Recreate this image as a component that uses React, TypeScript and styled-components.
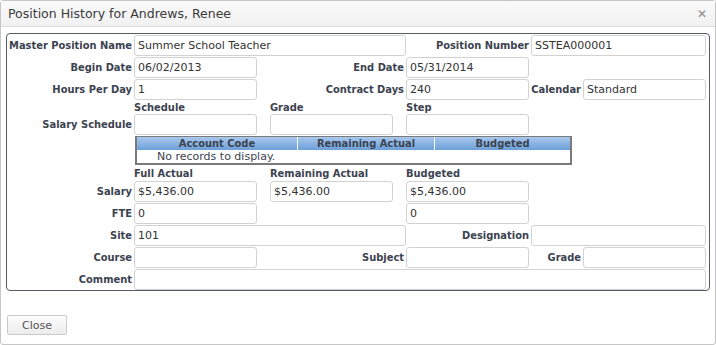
import React from "react";
import styled, { createGlobalStyle } from "styled-components";

const GlobalStyle = createGlobalStyle`
  html, body {
    margin: 0;
    padding: 0;
    background: #ffffff;
  }
  body {
    font-family: "DejaVu Sans", Verdana, sans-serif;
    font-size: 11px;
    color: #333;
  }
`;

const boldFont = `"DejaVu Sans Condensed", "DejaVu Sans", Verdana, sans-serif`;

const Dialog = styled.div`
  box-sizing: border-box;
  width: 716px;
  height: 345px;
  border: 1px solid #c6c6c6;
  border-radius: 3px;
  background: #fff;
  display: flex;
  flex-direction: column;
`;

const TitleBar = styled.div`
  height: 25px;
  display: flex;
  align-items: center;
  justify-content: space-between;
  padding: 0 8px 0 7px;
  background: linear-gradient(#fafafa, #f1f1f1);
  border-bottom: 1px solid #dcdcdc;
`;

const Title = styled.span`
  font-size: 12.5px;
  color: #3a3a3a;
`;

const CloseX = styled.span`
  font-size: 12px;
  color: #8a8a8a;
  line-height: 1;
`;

const Body = styled.div`
  padding: 6px 5px 0 5px;
  flex: 1;
  display: flex;
  flex-direction: column;
`;

const Fieldset = styled.div`
  box-sizing: border-box;
  width: 704px;
  border: 1px solid #555b66;
  border-radius: 4px;
  padding: 1px 1px 0 1px;
`;

const FormGrid = styled.div`
  display: grid;
  grid-template-columns: 126px 123px 13px 123px 13px 123px 2px 52px 123px;
  row-gap: 1px;
  grid-template-rows: 21px 21px 21px 12px 21px 29px 14px 21px 21px 21px 21px 21px;
`;

type Span = { col: string };

const Label = styled.label<Span>`
  grid-column: ${({ col }) => col};
  display: flex;
  align-items: center;
  justify-content: flex-end;
  padding-right: 2px;
  font-family: ${boldFont};
  font-weight: bold;
  color: #3c4350;
  white-space: nowrap;
`;

const ColHead = styled.div<Span>`
  grid-column: ${({ col }) => col};
  font-family: ${boldFont};
  font-weight: bold;
  color: #3c4350;
  display: flex;
  align-items: center;
  white-space: nowrap;
`;

const Field = styled.div<Span>`
  grid-column: ${({ col }) => col};
  box-sizing: border-box;
  height: 21px;
  border: 1px solid #d2d2d2;
  border-radius: 3px;
  padding: 0 3px;
  display: flex;
  align-items: center;
  color: #333;
  white-space: nowrap;
`;

const Spacer = styled.div<Span>`
  grid-column: ${({ col }) => col};
`;

const Grid = styled.div`
  grid-column: 2 / 9;
  box-sizing: border-box;
  width: 437px;
  margin-left: 1px;
  border: 2px solid #7a7a7a;
  border-top-width: 1px;
  display: flex;
  flex-direction: column;
`;

const GridHead = styled.div`
  display: grid;
  grid-template-columns: 161px 137px 1fr;
  height: 13px;
`;

const HeadCell = styled.div<{ last?: boolean }>`
  background: linear-gradient(#a9c8ec, #6c9fd9);
  border-right: ${({ last }) => (last ? "none" : "1px solid #fff")};
  font-family: ${boldFont};
  font-weight: bold;
  color: #3c4350;
  text-align: center;
  line-height: 13px;
`;

const EmptyRow = styled.div`
  padding-left: 20px;
  line-height: 13px;
  color: #3c4350;
`;

const Footer = styled.div`
  padding-top: 24px;
  padding-left: 1px;
`;

const Button = styled.button`
  box-sizing: border-box;
  width: 60px;
  height: 20px;
  border: 1px solid #cacaca;
  border-radius: 2px;
  background: linear-gradient(#fdfdfd, #ececec);
  font-family: inherit;
  font-size: 11px;
  color: #555;
  padding: 0;
`;

export default function App() {
  return (
    <>
      <GlobalStyle />
      <Dialog>
        <TitleBar>
          <Title>Position History for Andrews, Renee</Title>
          <CloseX>✕</CloseX>
        </TitleBar>
        <Body>
          <Fieldset>
            <FormGrid>
              <Label col="1">Master Position Name</Label>
              <Field col="2 / 6">Summer School Teacher</Field>
              <Label col="6 / 8">Position Number</Label>
              <Field col="8 / 10">SSTEA000001</Field>

              <Label col="1">Begin Date</Label>
              <Field col="2">06/02/2013</Field>
              <Label col="3 / 6">End Date</Label>
              <Field col="6">05/31/2014</Field>
              <Spacer col="7 / 10" />

              <Label col="1">Hours Per Day</Label>
              <Field col="2">1</Field>
              <Label col="3 / 6">Contract Days</Label>
              <Field col="6">240</Field>
              <Label col="7 / 9">Calendar</Label>
              <Field col="9">Standard</Field>

              <ColHead col="2">Schedule</ColHead>
              <ColHead col="4">Grade</ColHead>
              <ColHead col="6 / 10">Step</ColHead>

              <Label col="1">Salary Schedule</Label>
              <Field col="2" />
              <Field col="4" />
              <Field col="6" />
              <Spacer col="7 / 10" />

              <Grid>
                <GridHead>
                  <HeadCell>Account Code</HeadCell>
                  <HeadCell>Remaining Actual</HeadCell>
                  <HeadCell last>Budgeted</HeadCell>
                </GridHead>
                <EmptyRow>No records to display.</EmptyRow>
              </Grid>
              <Spacer col="9" />

              <ColHead col="2">Full Actual</ColHead>
              <ColHead col="4">Remaining Actual</ColHead>
              <ColHead col="6 / 10">Budgeted</ColHead>

              <Label col="1">Salary</Label>
              <Field col="2">$5,436.00</Field>
              <Field col="4">$5,436.00</Field>
              <Field col="6">$5,436.00</Field>
              <Spacer col="7 / 10" />

              <Label col="1">FTE</Label>
              <Field col="2">0</Field>
              <Field col="6">0</Field>
              <Spacer col="7 / 10" />

              <Label col="1">Site</Label>
              <Field col="2 / 6">101</Field>
              <Label col="6 / 8">Designation</Label>
              <Field col="8 / 10" />

              <Label col="1">Course</Label>
              <Field col="2" />
              <Label col="3 / 6">Subject</Label>
              <Field col="6" />
              <Label col="7 / 9">Grade</Label>
              <Field col="9" />

              <Label col="1">Comment</Label>
              <Field col="2 / 10" />
            </FormGrid>
          </Fieldset>
          <Footer>
            <Button>Close</Button>
          </Footer>
        </Body>
      </Dialog>
    </>
  );
}
